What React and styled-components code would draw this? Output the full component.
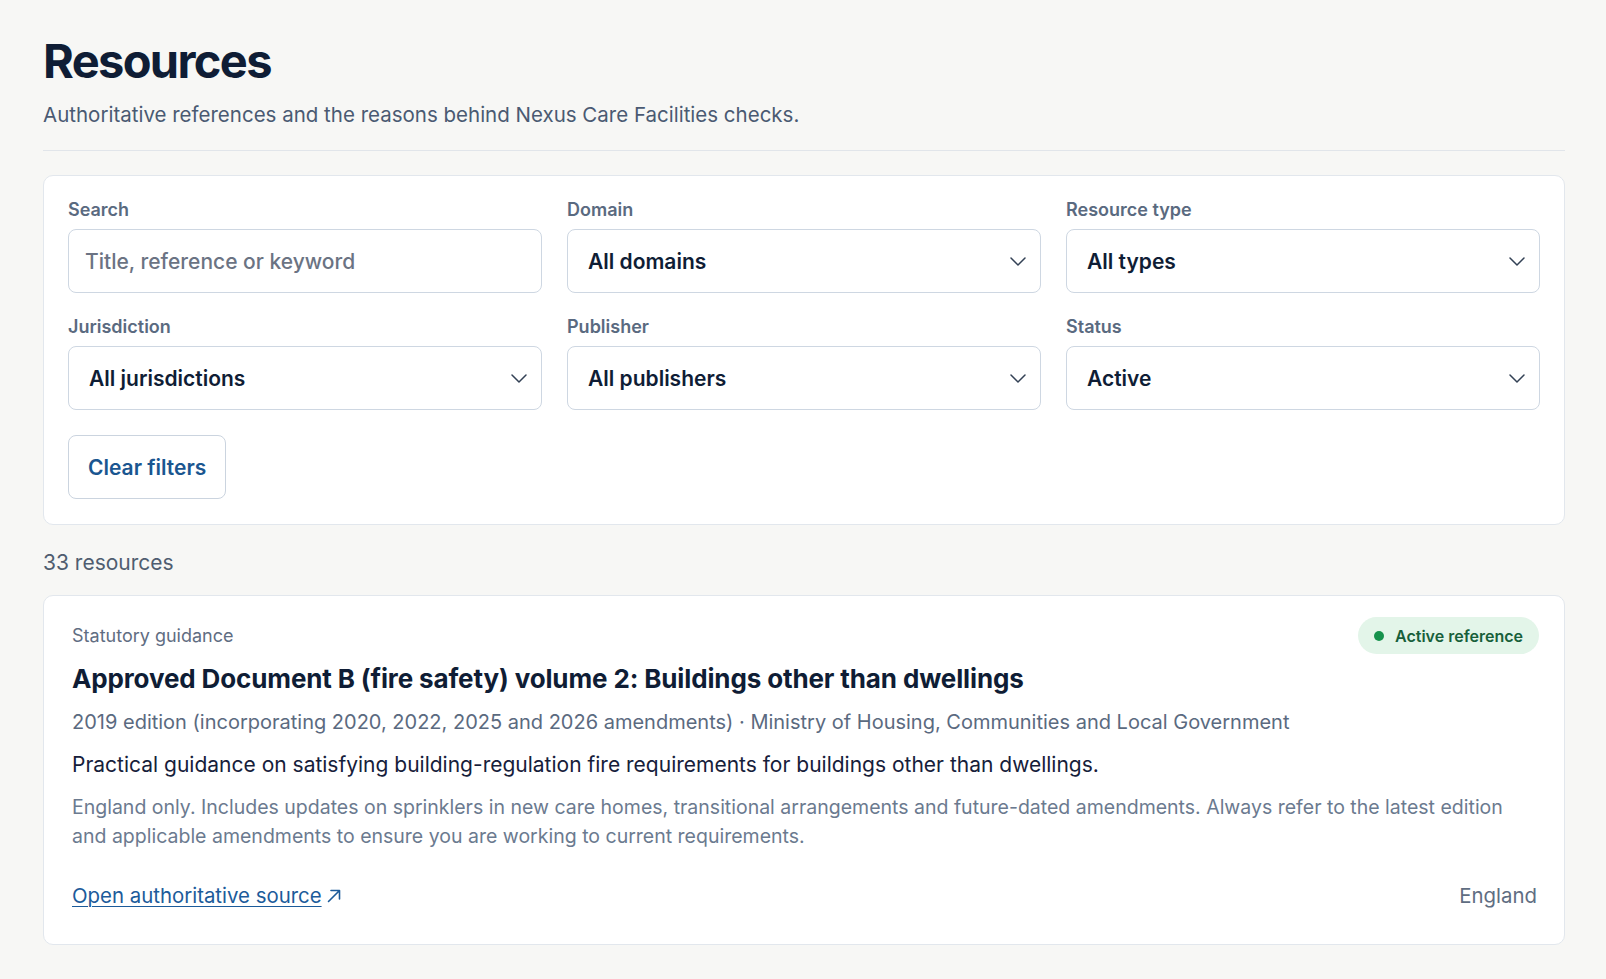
import React from "react";
import styled, { createGlobalStyle } from "styled-components";

const GlobalStyle = createGlobalStyle`
  * { box-sizing: border-box; }
  body {
    margin: 0;
    background: #f7f7f5;
    font-family: Inter, "Noto Sans", "Liberation Sans", sans-serif;
    color: #0f1d35;
  }
`;

const Page = styled.main`
  padding: 33px 41px 40px 43px;
`;

const Title = styled.h1`
  margin: 0;
  font-size: 47px;
  line-height: 56px;
  font-weight: 700;
  letter-spacing: -0.035em;
  color: #0f1d35;
`;

const Lead = styled.p`
  margin: 12px 0 0;
  font-size: 20.5px;
  line-height: 28px;
  color: #4a5a72;
`;

const Divider = styled.hr`
  margin: 21px 0 24px;
  border: 0;
  border-top: 1px solid #e1e5ea;
`;

const Panel = styled.section`
  background: #fff;
  border: 1px solid #e2e7ed;
  border-radius: 10px;
  padding: ${(p) => p.$pad || "22px 24px 25px"};
`;

const FilterGrid = styled.div`
  display: grid;
  grid-template-columns: repeat(3, 1fr);
  column-gap: 25px;
  row-gap: 22px;
`;

const Field = styled.label`
  display: flex;
  flex-direction: column;
  gap: 7px;
`;

const FieldLabel = styled.span`
  font-size: 18px;
  line-height: 24px;
  font-weight: 600;
  color: #5a6a80;
`;

const Control = styled.div`
  height: 64px;
  border: 1px solid #ced7e2;
  border-radius: 8px;
  background: #fff;
  display: flex;
  align-items: center;
  justify-content: space-between;
  padding: 0 14px 0 ${(p) => (p.$select ? "20px" : "16px")};
  font-size: 21px;
  font-weight: ${(p) => (p.$placeholder ? 500 : 600)};
  color: ${(p) => (p.$placeholder ? "#6b7383" : "#0f1d35")};
`;

const Chevron = () => (
  <svg width="16" height="9" viewBox="0 0 16 9" fill="none">
    <polyline
      points="1,1 8,8 15,1"
      stroke="#334155"
      strokeWidth="1.5"
      strokeLinecap="round"
      strokeLinejoin="round"
    />
  </svg>
);

const ClearButton = styled.button`
  margin-top: 25px;
  height: 64px;
  padding: 0 19px;
  background: #fff;
  border: 1px solid #cbd4df;
  border-radius: 8px;
  font-family: inherit;
  font-size: 21px;
  font-weight: 600;
  color: #1a5690;
  cursor: pointer;
`;

const Count = styled.p`
  margin: 24px 0 18px;
  font-size: 21px;
  line-height: 28px;
  color: #4f5d70;
`;

const CardHead = styled.div`
  display: flex;
  align-items: center;
  justify-content: space-between;
`;

const Kind = styled.span`
  font-size: 18px;
  line-height: 26px;
  color: #5f6d82;
`;

const Badge = styled.span`
  display: inline-flex;
  align-items: center;
  gap: 11px;
  height: 37px;
  padding: 0 16px;
  border-radius: 999px;
  background: #e3f5e9;
  color: #17603a;
  font-size: 16px;
  font-weight: 600;
  &::before {
    content: "";
    width: 10px;
    height: 10px;
    border-radius: 50%;
    background: #16924c;
  }
`;

const CardTitle = styled.h2`
  margin: 8px 0 0;
  font-size: 26px;
  line-height: 34px;
  font-weight: 700;
  letter-spacing: -0.005em;
  color: #0f1d35;
`;

const Text = styled.p`
  margin: ${(p) => p.$mt || "14px"} 0 0;
  font-size: ${(p) => p.$size || "20px"};
  line-height: ${(p) => p.$lh || "28px"};
  color: ${(p) => p.$color || "#5b6a80"};
`;

const CardFoot = styled.div`
  margin-top: 31px;
  display: flex;
  align-items: center;
  justify-content: space-between;
  font-size: 20.4px;
  line-height: 28px;
`;

const SourceLink = styled.a`
  display: inline-flex;
  align-items: center;
  gap: 5px;
  color: #1c5b9a;
  text-decoration: none;
  span {
    text-decoration: underline;
    text-underline-offset: 3px;
    text-decoration-thickness: 1px;
  }
`;

const ExternalArrow = () => (
  <svg width="14" height="14" viewBox="0 0 14 14" fill="none">
    <path
      d="M1.5 12.5 L12.5 1.5 M4 1.5 H12.5 V10"
      stroke="#1c5b9a"
      strokeWidth="1.6"
      strokeLinecap="round"
      strokeLinejoin="round"
    />
  </svg>
);

const Region = styled.span`
  color: #5f6d82;
  margin-right: 2px;
`;

const filters = [
  { label: "Search", value: "Title, reference or keyword", placeholder: true },
  { label: "Domain", value: "All domains", select: true },
  { label: "Resource type", value: "All types", select: true },
  { label: "Jurisdiction", value: "All jurisdictions", select: true },
  { label: "Publisher", value: "All publishers", select: true },
  { label: "Status", value: "Active", select: true },
];

export default function App() {
  return (
    <>
      <GlobalStyle />
      <Page>
        <Title>Resources</Title>
        <Lead>Authoritative references and the reasons behind Nexus Care Facilities checks.</Lead>
        <Divider />

        <Panel>
          <FilterGrid>
            {filters.map((f) => (
              <Field key={f.label}>
                <FieldLabel>{f.label}</FieldLabel>
                <Control $select={f.select} $placeholder={f.placeholder}>
                  <span>{f.value}</span>
                  {f.select && <Chevron />}
                </Control>
              </Field>
            ))}
          </FilterGrid>
          <ClearButton>Clear filters</ClearButton>
        </Panel>

        <Count>33 resources</Count>

        <Panel $pad="21px 25px 34px 28px">
          <CardHead>
            <Kind>Statutory guidance</Kind>
            <Badge>Active reference</Badge>
          </CardHead>
          <CardTitle>
            Approved Document B (fire safety) volume 2: Buildings other than dwellings
          </CardTitle>
          <Text $mt="12px">
            2019 edition (incorporating 2020, 2022, 2025 and 2026 amendments) · Ministry of
            Housing, Communities and Local Government
          </Text>
          <Text $mt="15px" $size="21px" $color="#16203a">
            Practical guidance on satisfying building-regulation fire requirements for buildings
            other than dwellings.
          </Text>
          <Text $mt="14px" $size="19.5px" $lh="29px" $color="#6b7a8f">
            England only. Includes updates on sprinklers in new care homes, transitional
            arrangements and future-dated amendments. Always refer to the latest edition and
            applicable amendments to ensure you are working to current requirements.
          </Text>
          <CardFoot>
            <SourceLink href="#">
              <span>Open authoritative source</span>
              <ExternalArrow />
            </SourceLink>
            <Region>England</Region>
          </CardFoot>
        </Panel>
      </Page>
    </>
  );
}
